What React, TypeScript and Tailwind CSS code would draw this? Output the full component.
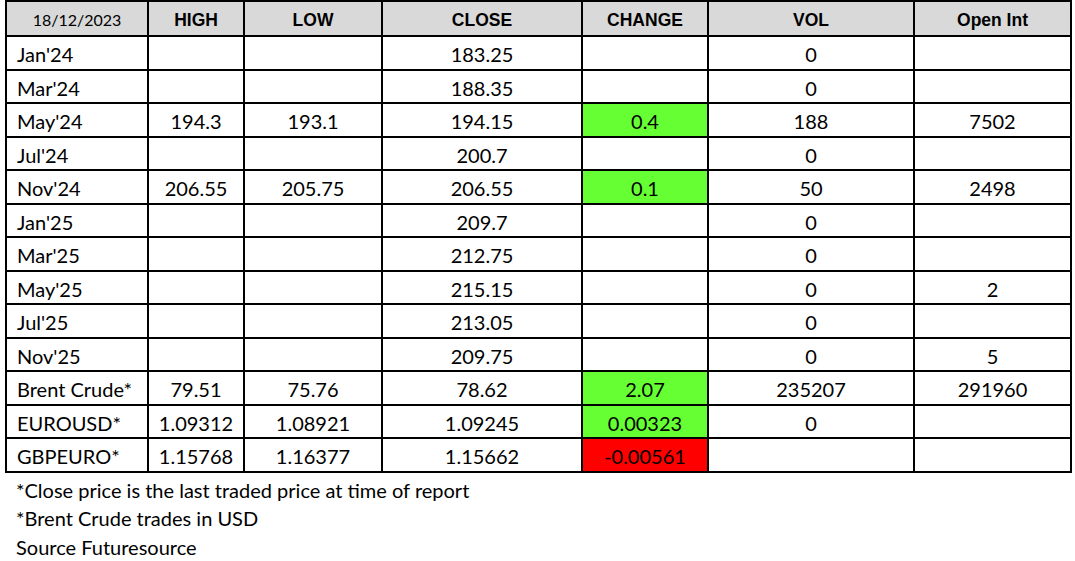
const headers = ["HIGH", "LOW", "CLOSE", "CHANGE", "VOL", "Open Int"];

type Row = {
  name: string;
  high?: string;
  low?: string;
  close: string;
  change?: string;
  tone?: "up" | "down";
  vol?: string;
  oi?: string;
};

const rows: Row[] = [
  { name: "Jan'24", close: "183.25", vol: "0" },
  { name: "Mar'24", close: "188.35", vol: "0" },
  { name: "May'24", high: "194.3", low: "193.1", close: "194.15", change: "0.4", tone: "up", vol: "188", oi: "7502" },
  { name: "Jul'24", close: "200.7", vol: "0" },
  { name: "Nov'24", high: "206.55", low: "205.75", close: "206.55", change: "0.1", tone: "up", vol: "50", oi: "2498" },
  { name: "Jan'25", close: "209.7", vol: "0" },
  { name: "Mar'25", close: "212.75", vol: "0" },
  { name: "May'25", close: "215.15", vol: "0", oi: "2" },
  { name: "Jul'25", close: "213.05", vol: "0" },
  { name: "Nov'25", close: "209.75", vol: "0", oi: "5" },
  { name: "Brent Crude*", high: "79.51", low: "75.76", close: "78.62", change: "2.07", tone: "up", vol: "235207", oi: "291960" },
  { name: "EUROUSD*", high: "1.09312", low: "1.08921", close: "1.09245", change: "0.00323", tone: "up", vol: "0" },
  { name: "GBPEURO*", high: "1.15768", low: "1.16377", close: "1.15662", change: "-0.00561", tone: "down" },
];

const body = "font-['Lato',sans-serif] text-[20px] text-black";

function Cell({ children, className = "" }: { children?: React.ReactNode; className?: string }) {
  return (
    <div className={`flex items-center justify-center bg-white pt-[3px] ${className}`}>{children}</div>
  );
}

export default function App() {
  return (
    <div className="w-[1075px] h-[561px] bg-white overflow-hidden">
      <div className="pl-[5px]">
        <div className="grid w-[1067px] grid-cols-[140px_94px_136px_198px_124px_204px_155px] grid-rows-[33px_repeat(13,31.5px)] gap-[2px] bg-black p-[2px]">
          <div className="flex items-center justify-center bg-[#d9d9d9] pt-[3px] font-['Lato',sans-serif] text-[16px] text-black">
            18/12/2023
          </div>
          {headers.map((h) => (
            <div
              key={h}
              className="flex items-center justify-center bg-[#d9d9d9] pt-[3px] font-['Liberation_Sans',Arial,sans-serif] text-[17.5px] font-bold text-black"
            >
              {h}
            </div>
          ))}
          {rows.map((r) => (
            <div key={r.name} className="contents">
              <Cell className={`${body} justify-start pl-[10px]`}>{r.name}</Cell>
              <Cell className={body}>{r.high}</Cell>
              <Cell className={body}>{r.low}</Cell>
              <Cell className={body}>{r.close}</Cell>
              <Cell
                className={`${body} ${r.tone === "up" ? "!bg-[#66ff33]" : r.tone === "down" ? "!bg-[#ff0000]" : ""}`}
              >
                {r.change}
              </Cell>
              <Cell className={body}>{r.vol}</Cell>
              <Cell className={body}>{r.oi}</Cell>
            </div>
          ))}
        </div>
      </div>
      <div className={`${body} pl-[16px] pt-[3px] leading-[28.5px]`}>
        <div>*Close price is the last traded price at time of report</div>
        <div>*Brent Crude trades in USD</div>
        <div>Source Futuresource</div>
      </div>
    </div>
  );
}
